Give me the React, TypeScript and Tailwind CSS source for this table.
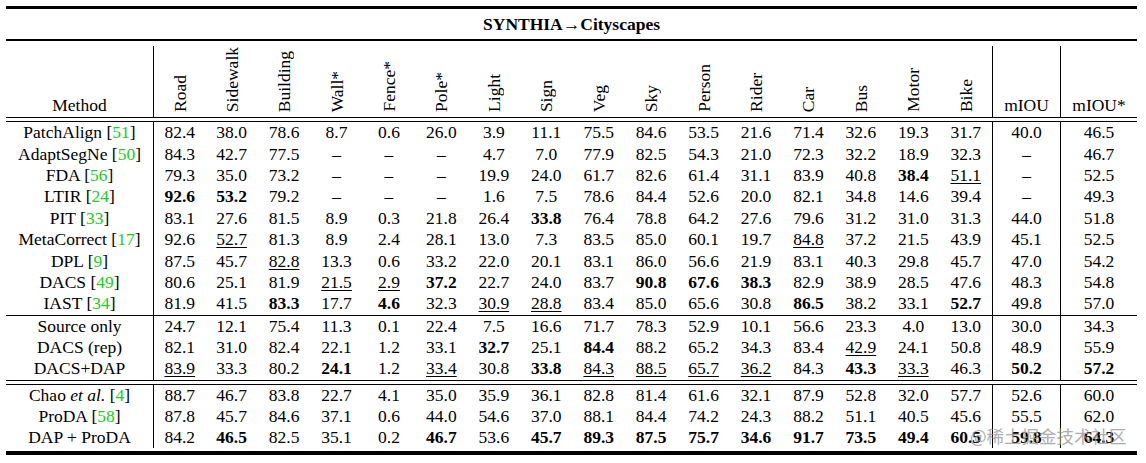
import React from "react";

const cols = ["Road","Sidewalk","Building","Wall*","Fence*","Pole*","Light","Sign","Veg","Sky","Person","Rider","Car","Bus","Motor","Bike"];

type Row = { name: string; it?: string; cite?: string; v: string[] };

const D = "–";

const sec1: Row[] = [
  { name: "PatchAlign", cite: "51", v: "82.4 38.0 78.6 8.7 0.6 26.0 3.9 11.1 75.5 84.6 53.5 21.6 71.4 32.6 19.3 31.7 40.0 46.5".split(" ") },
  { name: "AdaptSegNe", cite: "50", v: `84.3 42.7 77.5 ${D} ${D} ${D} 4.7 7.0 77.9 82.5 54.3 21.0 72.3 32.2 18.9 32.3 ${D} 46.7`.split(" ") },
  { name: "FDA", cite: "56", v: `79.3 35.0 73.2 ${D} ${D} ${D} 19.9 24.0 61.7 82.6 61.4 31.1 83.9 40.8 *38.4 _51.1 ${D} 52.5`.split(" ") },
  { name: "LTIR", cite: "24", v: `*92.6 *53.2 79.2 ${D} ${D} ${D} 1.6 7.5 78.6 84.4 52.6 20.0 82.1 34.8 14.6 39.4 ${D} 49.3`.split(" ") },
  { name: "PIT", cite: "33", v: "83.1 27.6 81.5 8.9 0.3 21.8 26.4 *33.8 76.4 78.8 64.2 27.6 79.6 31.2 31.0 31.3 44.0 51.8".split(" ") },
  { name: "MetaCorrect", cite: "17", v: "92.6 _52.7 81.3 8.9 2.4 28.1 13.0 7.3 83.5 85.0 60.1 19.7 _84.8 37.2 21.5 43.9 45.1 52.5".split(" ") },
  { name: "DPL", cite: "9", v: "87.5 45.7 _82.8 13.3 0.6 33.2 22.0 20.1 83.1 86.0 56.6 21.9 83.1 40.3 29.8 45.7 47.0 54.2".split(" ") },
  { name: "DACS", cite: "49", v: "80.6 25.1 81.9 _21.5 _2.9 *37.2 22.7 24.0 83.7 *90.8 *67.6 *38.3 82.9 38.9 28.5 47.6 48.3 54.8".split(" ") },
  { name: "IAST", cite: "34", v: "81.9 41.5 *83.3 17.7 *4.6 32.3 _30.9 _28.8 83.4 85.0 65.6 30.8 *86.5 38.2 33.1 *52.7 49.8 57.0".split(" ") },
];

const sec2: Row[] = [
  { name: "Source only", v: "24.7 12.1 75.4 11.3 0.1 22.4 7.5 16.6 71.7 78.3 52.9 10.1 56.6 23.3 4.0 13.0 30.0 34.3".split(" ") },
  { name: "DACS (rep)", v: "82.1 31.0 82.4 22.1 1.2 33.1 *32.7 25.1 *84.4 88.2 65.2 34.3 83.4 _42.9 24.1 50.8 48.9 55.9".split(" ") },
  { name: "DACS+DAP", v: "_83.9 33.3 80.2 *24.1 1.2 _33.4 30.8 *33.8 _84.3 _88.5 _65.7 _36.2 84.3 *43.3 _33.3 46.3 *50.2 *57.2".split(" ") },
];

const sec3: Row[] = [
  { name: "Chao", it: "et al.", cite: "4", v: "88.7 46.7 83.8 22.7 4.1 35.0 35.9 36.1 82.8 81.4 61.6 32.1 87.9 52.8 32.0 57.7 52.6 60.0".split(" ") },
  { name: "ProDA", cite: "58", v: "87.8 45.7 84.6 37.1 0.6 44.0 54.6 37.0 88.1 84.4 74.2 24.3 88.2 51.1 40.5 45.6 55.5 62.0".split(" ") },
  { name: "DAP + ProDA", v: "84.2 *46.5 82.5 35.1 0.2 *46.7 53.6 *45.7 *89.3 *87.5 *75.7 *34.6 *91.7 *73.5 *49.4 *60.5 *59.8 *64.3".split(" ") },
];

const grid = "grid grid-cols-[147px_repeat(16,52.44px)_68px_77px]";

function Val({ s }: { s: string }) {
  if (s.startsWith("*")) return <span className="font-bold">{s.slice(1)}</span>;
  if (s.startsWith("_")) return <span className="underline decoration-1 underline-offset-2">{s.slice(1)}</span>;
  return <span>{s}</span>;
}

function BodyRow({ r, h }: { r: Row; h: string }) {
  return (
    <div className={`${grid} ${h}`}>
      <div className="flex items-center justify-center whitespace-nowrap">
        <span>
          {r.name}
          {r.it ? <> <i>{r.it}</i></> : null}
          {r.cite ? <> [<span className="text-[#22cc22]">{r.cite}</span>]</> : null}
        </span>
      </div>
      {r.v.map((s, i) => (
        <div
          key={i}
          className={`flex items-center justify-center whitespace-nowrap ${i === 0 || i === 16 || i === 17 ? "border-l border-black" : ""}`}
        >
          <Val s={s} />
        </div>
      ))}
    </div>
  );
}

export default function App() {
  return (
    <div className="relative w-[1146px] h-[463px] bg-white text-black pl-[6px] pt-[6px] text-[17.5px] leading-[21px] overflow-hidden font-['Liberation_Serif','Times_New_Roman',serif]">
      <div className="w-[1131px]">
        <div className="h-[3px] bg-black" />
        <div className="h-[30px] flex items-center justify-center font-bold">SYNTHIA→Cityscapes</div>
        <div className="h-[2px] bg-black" />
        <div className="h-[5px]" />
        <div className={`${grid} h-[71px]`}>
          <div className="flex items-end justify-center pb-[1px]">Method</div>
          {cols.map((c, i) => (
            <div
              key={c}
              className={`flex flex-col items-center justify-end pb-[5px] ${i === 0 ? "border-l border-black" : ""}`}
            >
              <span className="[writing-mode:vertical-rl] rotate-180 whitespace-nowrap leading-[18px]">{c}</span>
            </div>
          ))}
          <div className="flex items-end justify-center pb-[1px] border-l border-black">mIOU</div>
          <div className="flex items-end justify-center pb-[1px] border-l border-black">mIOU*</div>
        </div>
        <div className="h-[1px] bg-black" />
        <div className="h-[3px]" />
        <div className="h-[1px] bg-black" />
        {sec1.map((r) => (
          <BodyRow key={r.name} r={r} h="h-[21.4px]" />
        ))}
        <div className="h-[1px] bg-black" />
        {sec2.map((r) => (
          <BodyRow key={r.name} r={r} h="h-[21.4px]" />
        ))}
        <div className="h-[1px] bg-black" />
        <div className="h-[3px]" />
        <div className="h-[1px] bg-black" />
        {sec3.map((r) => (
          <BodyRow key={r.name} r={r} h="h-[21px]" />
        ))}
        <div className="h-[3px]" />
        <div className="h-[4px] bg-black" />
      </div>
      <div className="absolute left-[970px] top-[424px] text-[17.5px] leading-[24px] text-[#9a9a9a] opacity-80 whitespace-nowrap font-['Noto_Sans_CJK_SC','Noto_Sans',sans-serif]">
        @稀土掘金技术社区
      </div>
    </div>
  );
}
